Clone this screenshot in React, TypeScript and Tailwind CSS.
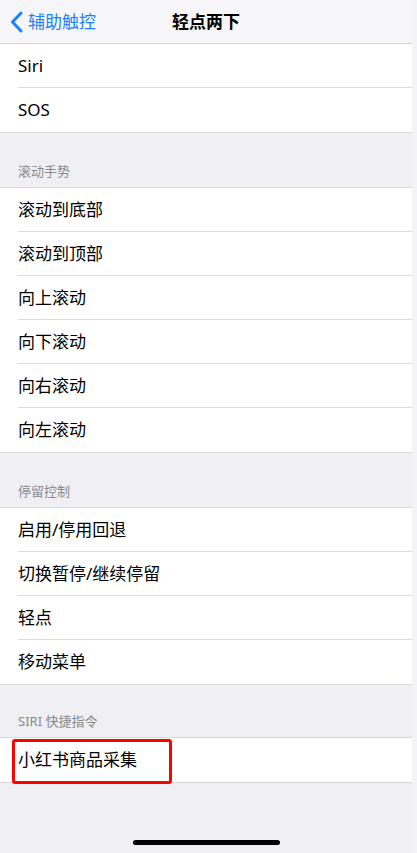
import React from "react";

const FONT = {
  fontFamily: '"Noto Sans", "Noto Sans CJK SC", sans-serif',
};

interface Section {
  title: string;
  items: string[];
}

const SECTIONS: Section[] = [
  {
    title: "滚动手势",
    items: ["滚动到底部", "滚动到顶部", "向上滚动", "向下滚动", "向右滚动", "向左滚动"],
  },
  { title: "停留控制", items: ["启用/停用回退", "切换暂停/继续停留", "轻点", "移动菜单"] },
];

function Row({ label, last }: { label: string; last?: boolean }) {
  return (
    <div className="h-[44px] pl-[18px]">
      <div
        className={`h-full flex items-center text-[17px] text-black ${
          last ? "" : "border-b border-[#dcdce0]"
        }`}
      >
        {label}
      </div>
    </div>
  );
}

function Header({ title, short }: { title: string; short?: boolean }) {
  return (
    <div
      className={`${
        short ? "h-[52px]" : "h-[54px]"
      } flex items-end pb-[6px] pl-[18px] text-[13px] text-[#8a8a8e]`}
    >
      {title}
    </div>
  );
}

export default function App() {
  return (
    <div className="w-[417px] h-[853px] bg-[#f4f4f7] overflow-hidden" style={FONT}>
      <div className="w-[412px] h-full bg-[#efeff4] flex flex-col relative">
        {/* Nav bar */}
        <div className="h-[44px] flex items-center relative bg-[#f6f6f8] border-b border-[#d6d6da]">
          <div className="flex items-center pl-[10px] text-[#1a82fb] text-[17px]">
            <svg width="14" height="22" viewBox="0 0 14 22" className="mr-[4px]">
              <path
                d="M11 2 L2.5 11 L11 20"
                fill="none"
                stroke="#1a82fb"
                strokeWidth="3"
                strokeLinecap="round"
                strokeLinejoin="round"
              />
            </svg>
            辅助触控
          </div>
          <div className="absolute left-0 right-0 text-center text-[17px] font-semibold text-black pointer-events-none">
            轻点两下
          </div>
        </div>

        {/* Top group sits directly under the nav bar */}
        <div className="bg-white border-b border-[#d8d8dc]">
          <Row label="Siri" />
          <Row label="SOS" last />
        </div>

        {SECTIONS.map((s) => (
          <div key={s.title}>
            <Header title={s.title} />
            <div className="bg-white border-y border-[#d8d8dc]">
              {s.items.map((item, j) => (
                <Row key={item} label={item} last={j === s.items.length - 1} />
              ))}
            </div>
          </div>
        ))}

        {/* Siri shortcuts */}
        <div>
          <Header title="SIRI 快捷指令" short />
          <div className="bg-white border-y border-[#d8d8dc] relative">
            <Row label="小红书商品采集" last />
            <div className="absolute left-[12px] top-[1px] w-[160px] h-[45px] border-[3px] border-[#ff0000] rounded-[3px]" />
          </div>
        </div>

        <div className="flex-1" />
        <div className="h-[13px] flex justify-center">
          <div className="w-[147px] h-[5px] rounded-full bg-black" />
        </div>
      </div>
    </div>
  );
}
